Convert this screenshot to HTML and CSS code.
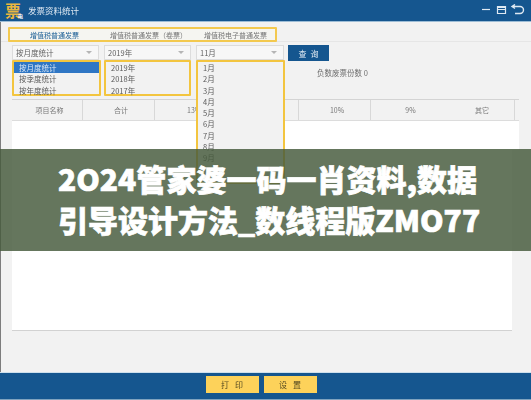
FILE: index.html
```html
<!DOCTYPE html>
<html lang="zh">
<head>
<meta charset="utf-8">
<title>发票资料统计</title>
<link rel="stylesheet" href="styles.css">
</head>
<body>
<div class="window">
  <header class="titlebar">
    <span class="logo">票<small>电</small></span>
    <span class="title">发票资料统计</span>
    <span class="controls">
      <svg width="44" height="12" viewBox="0 0 44 12" fill="none" stroke="#dfe9f2">
        <path d="M1 5.5h8" stroke-width="1.2"/>
        <path d="M16.5 2.5h8v7h-8zM16 3.5h9M16.5 5.5h8" stroke-width="1.2"/>
        <path d="M32 2.5h7a3.5 3.5 0 0 1 0 7h-5M34 .5l-3 2 3 2" stroke-width="1.4"/>
      </svg>
    </span>
  </header>

  <main class="main">
    <div class="tabband">
      <nav class="tabs">
        <span class="tab tab-active">增值税普通发票</span>
        <span class="tab">增值税普通发票（卷票）</span>
        <span class="tab">增值税电子普通发票</span>
      </nav>
    </div>

    <div class="filters">
      <div class="select select-a">
        <span>按月度统计</span><i class="caret"></i>
        <ul class="menu menu-a">
          <li class="selected">按月度统计</li>
          <li>按季度统计</li>
          <li>按年度统计</li>
        </ul>
      </div>
      <div class="select select-b">
        <span>2019年</span><i class="caret"></i>
        <ul class="menu menu-b">
          <li>2019年</li>
          <li>2018年</li>
          <li>2017年</li>
        </ul>
      </div>
      <div class="select select-c">
        <span>11月</span><i class="caret"></i>
        <ul class="menu menu-c">
          <li>1月</li><li>2月</li><li>3月</li><li>4月</li><li>5月</li><li>6月</li>
          <li>7月</li><li>8月</li><li>9月</li>
        </ul>
      </div>
      <button class="query">查 询</button>
    </div>

    <p class="status">负数废票份数 0</p>

    <section class="table">
      <div class="thead">
        <span class="th">项目名称</span>
        <span class="th">合计</span>
        <span class="th th-wide">13%</span>
        <span class="th">10%</span>
        <span class="th th-flat">9%</span>
        <span class="th">其它</span>
      </div>
      <div class="tfirst"></div>
      <div class="tbody"></div>
    </section>
  </main>

  <footer class="footer">
    <button class="action">打 印</button>
    <button class="action">设 置</button>
  </footer>

  <div class="banner">
    <h1>2O24管家婆一码一肖资料,数据<br>引导设计方法_数线程版ZMO77</h1>
  </div>
</div>
</body>
</html>
```
FILE: styles.css
```css
* { box-sizing: border-box; }

html, body { margin: 0; padding: 0; }

body {
  width: 531px;
  height: 400px;
  overflow: hidden;
  background: #fff;
  font-family: "Noto Sans CJK SC", "Liberation Sans", sans-serif;
}

.window {
  position: relative;
  width: 531px;
  height: 400px;
  display: flex;
  flex-direction: column;
  border-left: 1px solid #7d7d7d;
  background: #f2f2f2;
}

.titlebar {
  flex: none;
  height: 22px;
  display: flex;
  align-items: center;
  margin-left: -1px;
  padding: 0 5px 1px 5px;
  background: #15568f;
  border-bottom: 1px solid #9dbdd6;
  color: #dfe9f2;
}

.logo {
  position: relative;
  width: 16px;
  height: 18px;
  font-size: 16px;
  line-height: 18px;
  font-weight: 700;
  color: #eab640;
}

.logo small {
  position: absolute;
  right: -2px;
  bottom: 0;
  font-size: 5px;
  line-height: 6px;
  color: #fff;
}

.title {
  margin-left: 7px;
  font-size: 8.5px;
  line-height: 12px;
  filter: blur(0.3px);
}

.controls {
  margin-left: auto;
  display: flex;
  margin-right: 1px;
}

.main {
  flex: 1;
  min-height: 0;
  display: flex;
  flex-direction: column;
  filter: blur(0.3px);
}

.tabband {
  flex: none;
  height: 20px;
  padding: 5px 0 0 7px;
  border-bottom: 1px solid #e6e6e6;
}

.tabs {
  width: 269px;
  height: 15px;
  display: flex;
  align-items: center;
  border: 2px solid #f3c94f;
  border-radius: 1px;
  background: #f5f5f1;
  font-size: 7px;
  color: #777;
}

.tab { white-space: nowrap; }
.tab:nth-child(1) { margin-left: 20px; }
.tab:nth-child(2) { margin-left: 31px; }
.tab:nth-child(3) { margin-left: 17px; }
.tab-active { color: #1c5f96; }

.filters {
  flex: none;
  display: flex;
  margin: 3px 0 0 11px;
  height: 16px;
}

.select {
  position: relative;
  height: 15px;
  display: flex;
  align-items: center;
  justify-content: space-between;
  padding: 0 6px 0 3px;
  border: 1px solid #dcdcdc;
  background: #f7f7f7;
  font-size: 7.5px;
  color: #5e5e5e;
}

.select-a { width: 87px; }
.select-b { width: 87px; margin-left: 5px; }
.select-c { width: 88px; margin-left: 5px; }

.caret {
  width: 0;
  height: 0;
  border: 3px solid transparent;
  border-top: 3px solid #b5b5b5;
  border-bottom: 0;
}

.menu {
  position: absolute;
  top: 14px;
  left: -1px;
  margin: 0;
  padding: 0;
  list-style: none;
  border: 2px solid #f3c53f;
  border-radius: 1px;
  background: #f2f2f2;
  color: #5a5a5a;
  font-size: 7.5px;
}

.menu li {
  height: 11.3px;
  line-height: 11.3px;
  padding-left: 5px;
}

.menu-a {
  width: 89px;
  height: 36px;
}

.menu-a li.selected {
  background: #2f76c4;
  color: #dce8f5;
}

.menu-b {
  width: 87px;
  height: 36px;
}

.menu-c {
  width: 89px;
  height: 124px;
}

.query {
  width: 41px;
  height: 16px;
  margin-left: 4px;
  padding: 0;
  border: 0;
  background: #15568f;
  color: #e4edf5;
  font: inherit;
  font-size: 8px;
  word-spacing: 2px;
}

.status {
  flex: none;
  height: 12px;
  margin: 6px 0 0 316px;
  font-size: 7.5px;
  line-height: 12px;
  color: #6e6e6e;
}

.table {
  flex: none;
  margin: 20px 0 0 11px;
  width: 500px;
  display: flex;
  flex-direction: column;
}

.thead {
  width: 507px;
  height: 22px;
  display: grid;
  grid-template-columns: 71px 72px 144px 72px 74px 70px;
  border-top: 1px solid #d4d4d4;
  border-bottom: 1px solid #dcdcdc;
}

.th {
  display: flex;
  align-items: center;
  justify-content: center;
  padding-left: 5px;
  font-size: 7px;
  color: #777;
  border-right: 1px solid #d8d8d8;
}

.th-wide { justify-content: flex-start; padding-left: 32px; }
.th-flat { border-right: 0; }

.tfirst {
  width: 507px;
  height: 29px;
  background: #fff;
}

.tbody {
  height: 181px;
  background: #fff;
  border-bottom: 1px solid #d2d2d2;
}

.footer {
  flex: none;
  height: 28px;
  margin-left: -1px;
  display: flex;
  justify-content: center;
  gap: 5px;
  padding: 3px 9px 0 0;
  background: #15568f;
  border-top: 1px solid #cfe0ec;
  border-bottom: 1px solid #7fa3bf;
}

.action {
  width: 53px;
  height: 17px;
  padding: 0;
  border: 0;
  background: #fdd25a;
  color: #554a22;
  font: inherit;
  font-size: 8px;
  word-spacing: 4px;
  filter: blur(0.3px);
}

.banner {
  position: absolute;
  left: -1px;
  top: 149px;
  width: 531px;
  height: 102px;
  padding: 8.5px 0 0 58px;
  background: rgba(70, 90, 60, 0.83);
}

.banner h1 {
  margin: 0;
  font-size: 30px;
  line-height: 41px;
  font-weight: 900;
  color: #fff;
  white-space: nowrap;
  -webkit-text-stroke: 0.7px #fff;
}
```
